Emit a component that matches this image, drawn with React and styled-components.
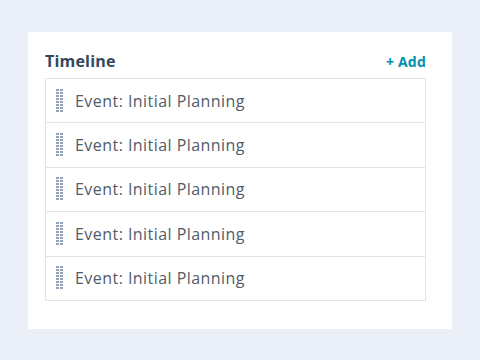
import React from 'react';
import styled, { createGlobalStyle } from 'styled-components';

const Global = createGlobalStyle`
  html, body { margin:0; padding:0; }
  body {
    width:480px;
    height:360px;
    background:#eaeff8;
    font-family:"Open Sans", "Liberation Sans", sans-serif;
  }
`;

const Page = styled.div`
  padding:32px 28px 32px 28px;
`;

const Card = styled.div`
  background:#fff;
  padding:14px 26px 28px 17px;
  display:flex;
  flex-direction:column;
`;

const Header = styled.div`
  display:flex;
  align-items:center;
  justify-content:space-between;
  height:30px;
  margin-bottom:2px;
`;

const Title = styled.h2`
  margin:0;
  font-size:16px;
  font-weight:700;
  letter-spacing:0.2px;
  color:#33475b;
`;

const AddButton = styled.button`
  border:none;
  background:none;
  padding:0;
  font-family:inherit;
  font-size:14px;
  font-weight:700;
  letter-spacing:0.2px;
  color:#0091ae;
  cursor:pointer;
`;

const List = styled.ul`
  list-style:none;
  margin:0;
  padding:0;
  border:1px solid #dfe3eb;
`;

const Row = styled.li`
  height:43.4px;
  display:flex;
  align-items:center;
  gap:12px;
  padding-left:10px;
  border-bottom:${p => (p.last ? 'none' : '1px solid #dfe3eb')};
  font-size:16px;
  letter-spacing:0.45px;
  color:#525c68;
`;

function Handle() {
  const dots = [];
  for (let r = 0; r < 8; r++) {
    for (let c = 0; c < 2; c++) {
      dots.push(<rect key={`${r}-${c}`} x={c * 4} y={r * 3} width="3" height="2" fill="#94a2b7" />);
    }
  }
  return (
    <svg width="7" height="24" viewBox="0 0 7 24">
      {dots}
    </svg>
  );
}

const items = Array.from({ length: 5 }, () => 'Event: Initial Planning');

export default function App() {
  return (
    <>
      <Global />
      <Page>
        <Card>
          <Header>
            <Title>Timeline</Title>
            <AddButton>+ Add</AddButton>
          </Header>
          <List>
            {items.map((t, i) => (
              <Row key={i} last={i === items.length - 1}>
                <Handle />
                {t}
              </Row>
            ))}
          </List>
        </Card>
      </Page>
    </>
  );
}
